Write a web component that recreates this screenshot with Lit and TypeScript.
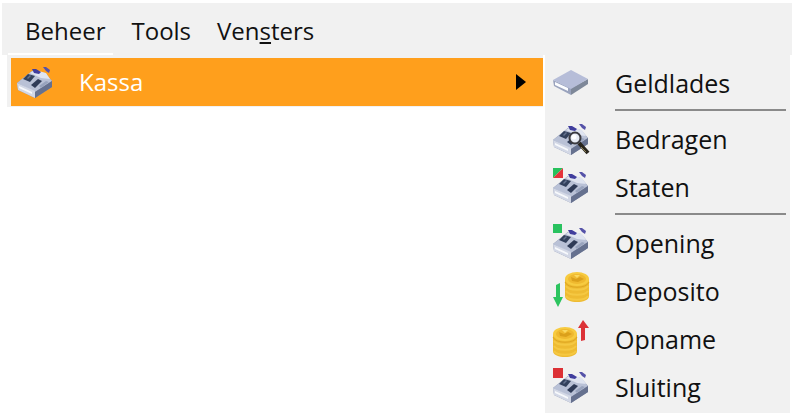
import { LitElement, html, css, svg } from "lit";
import { customElement, property } from "lit/decorators.js";

type IconName = "register" | "drawer" | "inspect" | "states" | "open" | "deposit" | "withdraw" | "close";

const register = svg`
  <path d="M2 21 L17 9 L30 11 L37 19 L37 25 L20 36 L3 28 Z" fill="#8790ab"/>
  <path d="M2 21 L17 9 L30 11 L37 19 L20 30 Z" fill="#b9c1d6"/>
  <path d="M2 21 L20 29 L20 36 L3 28 Z" fill="#d3d8e6"/>
  <path d="M20 30 L37 19 L37 25 L20 36 Z" fill="#66718f"/>
  <path d="M4 24 L17 30 L17 32 L4 26 Z" fill="#f7f9fc"/>
  <path d="M15 11 L20 8 L31 11 L35 17 L26 16 Z" fill="#dfe4f0"/>
  <path d="M8 17 L13 12 L20 14 L15 20 Z" fill="#33415c"/>
  <path d="M12 16 L15 13 L16 14 L13 17 Z" fill="#66748f"/>
  <path d="M16 23 L23 17 L27 19 L20 26 Z" fill="#2f3b57"/>
  <path d="M24 24 L31 19 L34 20 L26 26 Z" fill="#98a3bd"/>
  <path d="M17 7 L21 7 L26 10 L24 12 L19 11 Z" fill="#403d9d"/>
  <path d="M28 5 L31 5 L35 8 L34 11 L31 9 Z" fill="#5552a8"/>`;

const coins = svg`
  <path d="M1 8 V25 C1 33 25 33 25 25 V8 Z" fill="#eebb32"/>
  <path d="M2 15 C5 20 21 20 24 15 M2 20 C5 25 21 25 24 20 M2 25 C5 30 21 30 24 25" fill="none" stroke="#f5c842" stroke-width="2"/>
  <path d="M1 11 C3 18 23 18 25 11" fill="none" stroke="#dfa721" stroke-width="1"/>
  <ellipse cx="13" cy="8" rx="12" ry="7" fill="#f7cb40"/>
  <ellipse cx="13" cy="8" rx="9" ry="5" fill="#efb92f"/>
  <path d="M7 6 L12 8 L16 6 L20 8 L14 11 L8 10 Z" fill="#dba01b"/>
  <path d="M10 4 L16 4 L13 7 Z" fill="#fbd960"/>`;

const drawings = {
  register,
  drawer: svg`
    <path d="M2 17 L20 25 L20 32 L3 23 Z" fill="#9aa3bd"/>
    <path d="M4 19 L17 25 L17 28 L4 22 Z" fill="#fcfdff"/>
    <path d="M20 25 L37 16 L37 21 L20 32 Z" fill="#7e8899"/>
    <path d="M2 17 L20 7 L37 16 L20 26 Z" fill="#b6bdd8"/>`,
  inspect: svg`${register}
    <path d="M28 24 L37 34" stroke="#29251d" stroke-width="4"/>
    <path d="M30 28 L35 33" stroke="#8b8053" stroke-width="1"/>
    <circle cx="24" cy="19" r="5.5" fill="#e8ecf5" stroke="#3a3a40" stroke-width="2"/>
    <circle cx="23" cy="18" r="2.5" fill="#fff"/>`,
  states: svg`${register}
    <path d="M2 1 H12 L2 11 Z" fill="#27c15c"/>
    <path d="M12 1 V11 H2 Z" fill="#e5333b"/>`,
  open: svg`${register}<rect x="2" y="1" width="9" height="9" fill="#29c25f"/>`,
  close: svg`${register}<rect x="2" y="1" width="10" height="10" fill="#dc3035"/>`,
  deposit: svg`<g transform="translate(13 0)">${coins}</g>
    <path d="M5 14 L9 12 V26 H12 L7 36 L2 26 H5 Z" fill="#2cc45f"/>`,
  withdraw: svg`<g transform="translate(1 7)">${coins}</g>
    <path d="M30 22 V9 H27 L32 1 L38 9 L34 9 V21 Z" fill="#dc3237"/>`,
};

@customElement("menu-icon")
class MenuIcon extends LitElement {
  @property() name: IconName = "register";
  static styles = css`
    :host { display: block; flex: none; }
    .icon { display: block; width: 40px; height: 40px; }
  `;
  render() {
    return html`<svg class="icon" viewBox="0 0 40 40" aria-hidden="true">${drawings[this.name]}</svg>`;
  }
}

type Entry = { icon: IconName; label: string };

const groups: Entry[][] = [
  [{ icon: "drawer", label: "Geldlades" }],
  [{ icon: "inspect", label: "Bedragen" }, { icon: "states", label: "Staten" }],
  [
    { icon: "open", label: "Opening" },
    { icon: "deposit", label: "Deposito" },
    { icon: "withdraw", label: "Opname" },
    { icon: "close", label: "Sluiting" },
  ],
];

@customElement("app-root")
class AppRoot extends LitElement {
  static styles = css`
    :host {
      display: block;
      background: #fff;
      color: #111;
      font: 24px/32px "Open Sans", "Noto Sans", sans-serif;
    }
    button {
      margin: 0;
      border: 0;
      background: none;
      color: inherit;
      font: inherit;
      text-align: left;
    }
    .bar {
      display: flex;
      gap: 1px;
      margin: 3px 0 0 2px;
      padding: 12px 0 0 6px;
      background: #f1f1f1;
    }
    .top { padding: 0 8px 6px 17px; border-bottom: 2px solid transparent; }
    .opened { border-bottom-color: #fff; }
    .menus { display: flex; align-items: flex-start; }
    .main {
      flex: 1;
      margin: 0 2px 0 7px;
      padding: 3px 0 1px 4px;
      background: #f1f1f1;
    }
    .item {
      display: flex;
      align-items: center;
      width: 100%;
      height: 48px;
      gap: 24px;
      padding: 0 6px;
    }
    .current { background: #ff9f1c; color: #fff; padding: 0 17px 0 4px; }
    .label { flex: 1; }
    .arrow { width: 11px; height: 18px; fill: #000; }
    .sub {
      width: 245px;
      box-sizing: border-box;
      margin-right: 2px;
      padding: 4px 0 2px;
      background: #f1f1f1;
      font-size: 25px;
    }
    .line {
      height: 2px;
      margin: 2px 4px 4px 70px;
      border: 0;
      background: #8a8a8a;
    }
  `;

  render() {
    return html`
      <nav class="bar">
        <button class="top opened">Beheer</button>
        <button class="top">Tools</button>
        <button class="top">Ven<u>s</u>ters</button>
      </nav>
      <div class="menus">
        <div class="main" role="menu">
          <button class="item current" role="menuitem" aria-haspopup="true">
            <menu-icon name="register"></menu-icon>
            <span class="label">Kassa</span>
            <svg class="arrow" viewBox="0 0 11 18" aria-hidden="true"><path d="M1 1 L11 9 L1 17 Z" /></svg>
          </button>
        </div>
        <div class="sub" role="menu">
          ${groups.map((group, i) => html`
            ${i ? html`<hr class="line" />` : ""}
            ${group.map((entry) => html`
              <button class="item" role="menuitem">
                <menu-icon name=${entry.icon}></menu-icon>
                <span class="label">${entry.label}</span>
              </button>`)}
          `)}
        </div>
      </div>
    `;
  }
}
